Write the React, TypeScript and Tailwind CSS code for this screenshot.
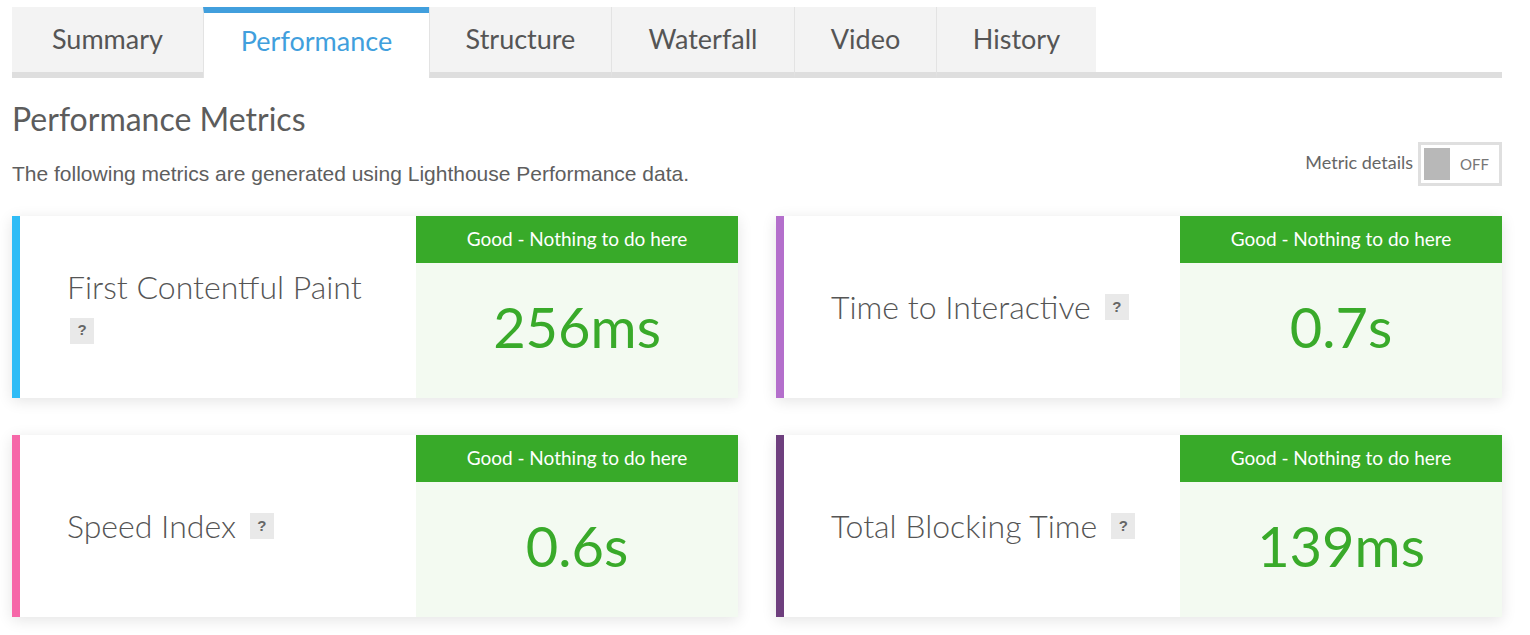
import React from 'react';

type Tab = { label: string; width: string };

const tabs: Tab[] = [
  { label: 'Summary', width: 'w-[191px]' },
  { label: 'Performance', width: 'w-[226px]' },
  { label: 'Structure', width: 'w-[182px]' },
  { label: 'Waterfall', width: 'w-[183px]' },
  { label: 'Video', width: 'w-[142px]' },
  { label: 'History', width: 'w-[160px]' },
];

interface Metric {
  name: string;
  value: string;
  accent: string;
  // badge drops to its own line when the name is long
  stacked?: boolean;
}

const metrics: Metric[] = [
  { name: 'First Contentful Paint', value: '256ms', accent: 'border-[#2fbcf6]', stacked: true },
  { name: 'Time to Interactive', value: '0.7s', accent: 'border-[#b46fcc]' },
  { name: 'Speed Index', value: '0.6s', accent: 'border-[#f667a8]' },
  { name: 'Total Blocking Time', value: '139ms', accent: 'border-[#6e3f7e]' },
];

const display = "font-['Lato',_'Open_Sans',_sans-serif]";

function HelpBadge({ className = '' }: { className?: string }) {
  return (
    <span
      className={`inline-flex items-center justify-center w-[24px] h-[26px] bg-[#e9e9e9] text-[#666] text-[15px] font-bold font-['Liberation_Sans',_Arial,_sans-serif] align-middle ${className}`}
    >
      ?
    </span>
  );
}

function MetricCard({ metric }: { metric: Metric }) {
  return (
    <div
      className={`flex h-[182px] bg-white border-l-8 ${metric.accent} shadow-[0_3px_14px_rgba(0,0,0,0.11)]`}
    >
      <div className="flex-1 flex items-center pl-[47px] pr-4">
        {metric.stacked ? (
          <div className="flex flex-col items-start -mt-[2px]">
            <span className="text-[32px] leading-[36px] font-light text-[#555]">{metric.name}</span>
            <HelpBadge className="mt-[13px] ml-[3px]" />
          </div>
        ) : (
          <div className="flex items-center">
            <span className="text-[32px] leading-[36px] font-light text-[#555]">{metric.name}</span>
            <HelpBadge className="ml-[14px]" />
          </div>
        )}
      </div>

      <div className="w-[322px] flex flex-col">
        <div className="h-[47px] bg-[#38aa29] flex items-center justify-center text-white text-[19px]">
          Good - Nothing to do here
        </div>
        <div className="flex-1 bg-[#f3faf1] flex items-center justify-center pb-[8px] text-[#39aa2a] text-[56px] leading-none">
          {metric.value}
        </div>
      </div>
    </div>
  );
}

export default function App() {
  return (
    <div className={`bg-white min-h-[635px] px-[12px] pt-[7px] pr-[28px] ${display}`}>
      {/* Tab strip */}
      <div className="flex items-start">
        {tabs.map((tab) =>
          tab.label === 'Performance' ? (
            <div
              key={tab.label}
              className={`${tab.width} h-[71px] bg-white border-t-[6px] border-[#419fdd] border-l border-l-[#e3e3e3] flex items-center justify-center pb-[9px] text-[27px] text-[#419fdd]`}
            >
              {tab.label}
            </div>
          ) : (
            <div
              key={tab.label}
              className={`${tab.width} h-[71px] bg-[#f3f3f3] border-b-[6px] border-[#dedede] border-l border-l-[#e3e3e3] first:border-l-0 flex items-center justify-center text-[27px] text-[#555]`}
            >
              {tab.label}
            </div>
          )
        )}
        <div className="flex-1 h-[71px] border-b-[6px] border-[#dedede]" />
      </div>

      <h2 className="mt-[22px] text-[32px] leading-[38px] text-[#5c5c5c]">Performance Metrics</h2>

      <div className="flex items-end justify-between mt-[4px]">
        <p className="text-[21px] leading-[24px] text-[#5e5e5e] font-['Liberation_Sans',_Arial,_sans-serif] mb-[3px]">
          The following metrics are generated using Lighthouse Performance data.
        </p>
        <div className="flex items-center gap-[5px] mb-[3px]">
          <span className="text-[18px] text-[#666] -mt-[3px]">Metric details</span>
          <div className="w-[84px] h-[44px] border-[3px] border-[#dfdfdf] flex items-center p-[3px]">
            <span className="w-[26px] h-[32px] bg-[#b8b8b8]" />
            <span className="flex-1 text-center text-[15px] text-[#777] pl-[3px]">OFF</span>
          </div>
        </div>
      </div>

      <div className="grid grid-cols-2 gap-x-[38px] gap-y-[37px] mt-[27px]">
        {metrics.map((m) => (
          <MetricCard key={m.name} metric={m} />
        ))}
      </div>
    </div>
  );
}
